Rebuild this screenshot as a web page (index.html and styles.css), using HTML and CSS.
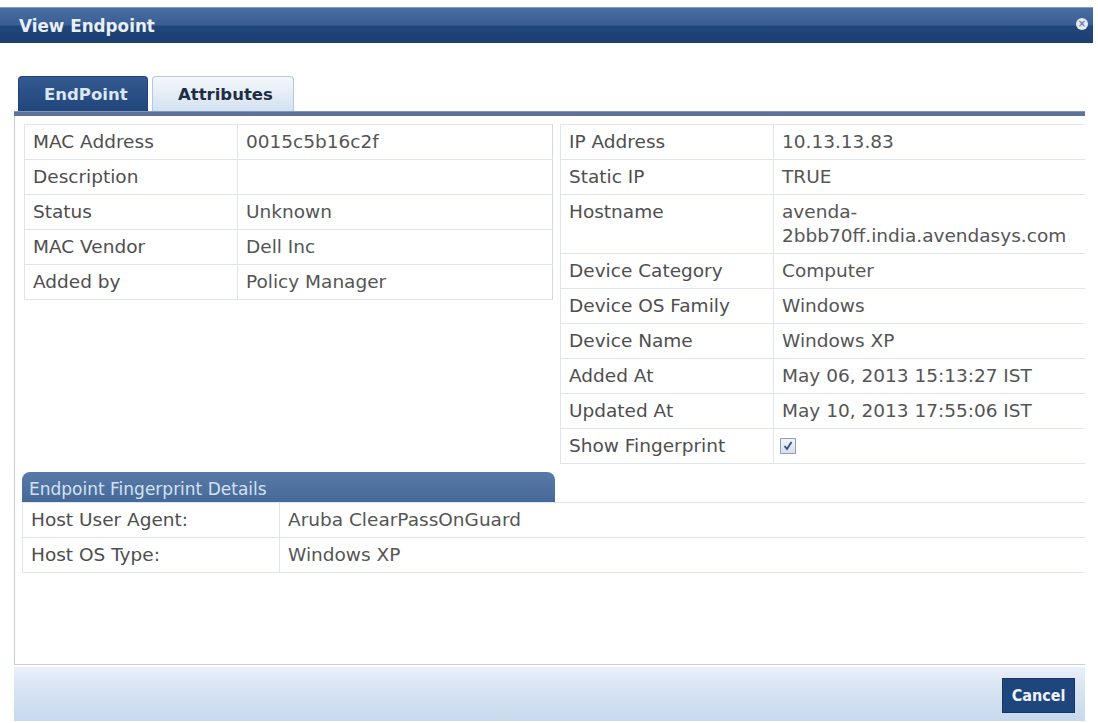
FILE: index.html
```html
<!DOCTYPE html>
<html lang="en">
<head>
    <meta charset="UTF-8">
    <meta name="viewport" content="width=device-width, initial-scale=1.0">
    <title>View Endpoint</title>
    <link rel="stylesheet" href="styles.css">
</head>
<body>
    <div class="dialog">
        <div class="titlebar">
            <span class="title">View Endpoint</span>
            <span class="close-btn"><span class="close-x">&times;</span></span>
        </div>

        <div class="content">
            <div class="tabs">
                <a href="#" class="tab active">EndPoint</a>
                <a href="#" class="tab">Attributes</a>
            </div>
            <div class="tab-bar"></div>

            <div class="panel">
                <div class="overview">
                    <table class="info left-info">
                        <tr><td class="label">MAC Address</td><td>0015c5b16c2f</td></tr>
                        <tr><td class="label">Description</td><td></td></tr>
                        <tr><td class="label">Status</td><td>Unknown</td></tr>
                        <tr><td class="label">MAC Vendor</td><td>Dell Inc</td></tr>
                        <tr><td class="label">Added by</td><td>Policy Manager</td></tr>
                    </table>

                    <table class="info right-info">
                        <tr><td class="label">IP Address</td><td>10.13.13.83</td></tr>
                        <tr><td class="label">Static IP</td><td>TRUE</td></tr>
                        <tr><td class="label">Hostname</td><td>avenda-2bbb70ff.india.avendasys.com</td></tr>
                        <tr><td class="label">Device Category</td><td>Computer</td></tr>
                        <tr><td class="label">Device OS Family</td><td>Windows</td></tr>
                        <tr><td class="label">Device Name</td><td>Windows XP</td></tr>
                        <tr><td class="label">Added At</td><td>May 06, 2013 15:13:27 IST</td></tr>
                        <tr><td class="label">Updated At</td><td>May 10, 2013 17:55:06 IST</td></tr>
                        <tr>
                            <td class="label">Show Fingerprint</td>
                            <td>
                                <span class="checkbox">
                                    <svg width="12" height="12" viewBox="0 0 12 12">
                                        <path d="M2.5 6 L5 9 L9.5 2" fill="none" stroke="#2d4f86" stroke-width="1.8"/>
                                    </svg>
                                </span>
                            </td>
                        </tr>
                    </table>
                </div>

                <div class="fingerprint">
                    <div class="section-head">Endpoint Fingerprint Details</div>
                    <table class="info fp-info">
                        <tr><td class="label">Host User Agent:</td><td>Aruba ClearPassOnGuard</td></tr>
                        <tr><td class="label">Host OS Type:</td><td>Windows XP</td></tr>
                    </table>
                </div>
            </div>

            <div class="footer">
                <button class="cancel">Cancel</button>
            </div>
        </div>
    </div>
</body>
</html>
```

FILE: styles.css
```css
body {
    font-family: "DejaVu Sans", Verdana, sans-serif;
    margin: 0;
    padding: 0;
    background: #ffffff;
    color: #555555;
}

.dialog {
    padding-top: 7px;
}

.titlebar {
    display: flex;
    justify-content: space-between;
    align-items: center;
    height: 36px;
    margin-right: 5px;
    padding: 0 5px 0 19px;
    background: linear-gradient(#4a6ea2, #3a5e94 48%, #21467a 52%, #1c3f72);
    border-top: 1px solid #7f9cc4;
    box-sizing: border-box;
}

.title {
    color: #e9eff8;
    font-weight: bold;
    font-size: 16.8px;
}

.close-btn {
    display: flex;
    align-items: center;
    justify-content: center;
    width: 12px;
    height: 12px;
    border-radius: 50%;
    background: #e6ebf2;
    margin-top: -4px;
}

.close-x {
    font-size: 10px;
    line-height: 10px;
    color: #6c7d96;
    font-weight: bold;
}

.content {
    margin: 0 13px 0 14px;
}

.tabs {
    display: flex;
    gap: 4px;
    margin-top: 33px;
    padding-left: 4px;
}

.tab {
    display: block;
    height: 35px;
    line-height: 36px;
    box-sizing: border-box;
    padding: 0 20px 0 25px;
    font-size: 16.5px;
    font-weight: bold;
    text-decoration: none;
    color: #1e2d44;
    background: linear-gradient(#f5f8fc, #d3e1f0);
    border: 1px solid #b7c7db;
    border-bottom: none;
    border-radius: 4px 4px 0 0;
}

.tab.active {
    width: 130px;
    color: #dce7f5;
    background: linear-gradient(#33598f, #21467b);
    border-color: #20447a;
}

.tab-bar {
    height: 4px;
    background: #5d719a;
    border-top: 1px solid #8496b8;
}

.panel {
    height: 549px;
    box-sizing: border-box;
    padding: 8px 0 0 7px;
    border-left: 1px solid #c9ced8;
    border-bottom: 1px solid #c9ced8;
}

.overview {
    display: flex;
    align-items: flex-start;
    gap: 7px;
    padding-left: 2px;
}

.info {
    border-collapse: collapse;
    font-size: 18.5px;
}

.info td {
    border: 1px solid #dfe5ec;
    padding: 5px 8px 5px 8px;
    line-height: 24px;
    vertical-align: top;
    color: #555555;
}

.info td.label {
    color: #4e4e4e;
}

.left-info {
    width: 529px;
}

.left-info td.label {
    width: 196px;
}

.left-info tr td:last-child {
    border-right-color: #d3d9e2;
}

.right-info {
    flex: 1;
}

.right-info td.label {
    width: 196px;
}

.right-info td:last-child {
    border-right: none;
}

.checkbox {
    display: inline-flex;
    align-items: center;
    justify-content: center;
    width: 14px;
    height: 14px;
    margin: 4px 0 0 -2px;
    border: 1px solid #8f9fb8;
    background: linear-gradient(#f0f3f8, #d9e0ea);
    vertical-align: top;
}

.fingerprint {
    margin-top: 8px;
}

.section-head {
    width: 533px;
    height: 30px;
    line-height: 34px;
    box-sizing: border-box;
    padding-left: 7px;
    font-size: 17px;
    color: #d3e2f4;
    background: linear-gradient(#587aa6, #46699a);
    border-radius: 8px 8px 0 0;
}

.fp-info {
    width: 100%;
}

.fp-info td.label {
    width: 240px;
}

.fp-info td:last-child {
    border-right: none;
}

.footer {
    display: flex;
    justify-content: flex-end;
    height: 54px;
    margin-top: 2px;
    padding: 11px 10px 0 0;
    box-sizing: border-box;
    background: linear-gradient(#e9f0f9, #d6e3f2 45%, #c7d9ee);
}

.cancel {
    width: 73px;
    height: 35px;
    background: #1f467c;
    border: 1px solid #163763;
    color: #eef3fa;
    font-family: "DejaVu Sans Condensed", "DejaVu Sans", sans-serif;
    font-weight: bold;
    font-size: 16px;
    cursor: pointer;
    padding: 0;
}
```
